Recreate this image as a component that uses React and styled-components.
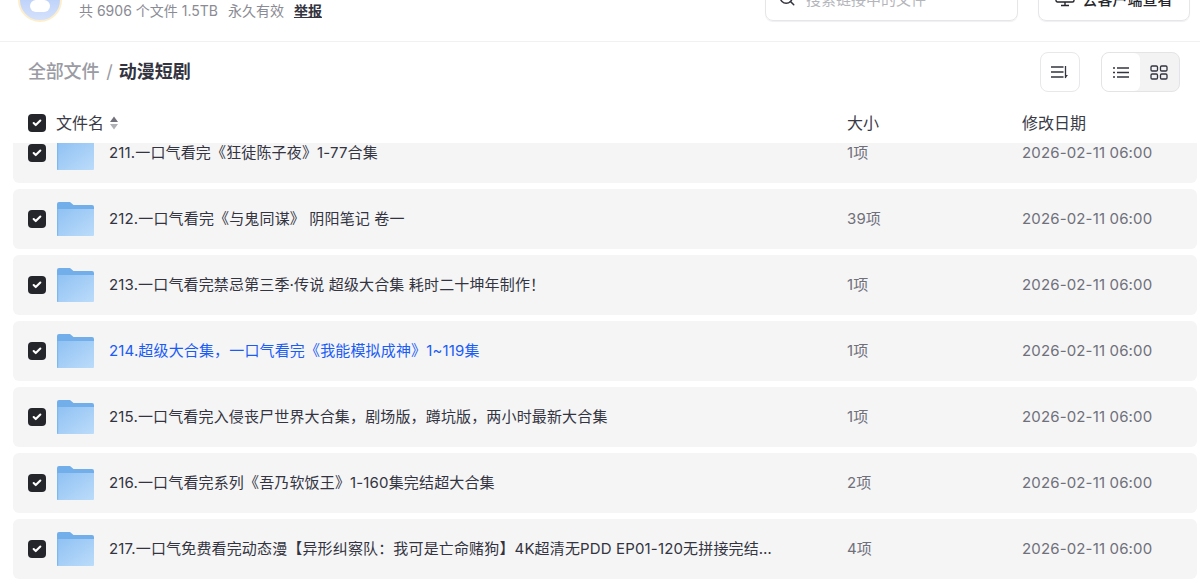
import { createGlobalStyle } from "styled-components"
import styled from "styled-components"
import { Check, Search } from "lucide-react"

const GlobalStyle = createGlobalStyle`
  html, body {
    margin: 0;
    height: 585px;
    overflow: hidden;
    background: #fff;
    font-family: Inter, "Noto Sans CJK SC", sans-serif;
    color: #25262b;
  }
`

const Page = styled.div`
  width: 1200px;
  height: 585px;
  display: flex;
  flex-direction: column;
  overflow: hidden;
`

const TopBar = styled.header`
  height: 41px;
  flex: none;
  border-bottom: 1px solid #f1f1f3;
  display: flex;
  align-items: flex-end;
  justify-content: space-between;
  padding: 0 10px 0 18px;
  overflow: hidden;
`

const ShareInfo = styled.div`
  display: flex;
  align-items: flex-end;
  gap: 17px;
  padding-bottom: 20px;
`

const Avatar = styled.div`
  width: 44px;
  height: 44px;
  flex: none;
  box-sizing: border-box;
  border-radius: 50%;
  border: 2px solid #fdeecb;
  background: linear-gradient(180deg, #a9c3f7, #d5e2fc);
  display: flex;
  align-items: center;
  justify-content: center;
  margin-bottom: -1px;
`

const AvatarDot = styled.span`
  width: 20px;
  height: 12px;
  border-radius: 6px;
  background: #fff;
  margin-top: 12px;
`

const Meta = styled.div`
  display: flex;
  gap: 10px;
  font-size: 14px;
  line-height: 18px;
  margin-bottom: 1px;
  color: #8a8b94;
`

const ReportLink = styled.a`
  color: #33343f;
  font-weight: 600;
  text-decoration: underline;
`

const TopActions = styled.div`
  display: flex;
  gap: 20px;
`

const SearchBox = styled.div`
  width: 253px;
  height: 46px;
  box-sizing: border-box;
  margin-bottom: 20px;
  border: 1px solid #e6e6e9;
  border-radius: 8px;
  display: flex;
  align-items: center;
  gap: 10px;
  padding: 0 12px;
  font-size: 15px;
  color: #b4b5bb;
  box-shadow: 0 1px 1px #f0f0f2;
`

const ClientButton = styled.div`
  width: 152px;
  height: 46px;
  box-sizing: border-box;
  margin-bottom: 20px;
  border: 1px solid #e6e6e9;
  border-radius: 8px;
  display: flex;
  align-items: center;
  justify-content: center;
  gap: 7px;
  font-size: 15px;
  font-weight: 500;
  color: #25262b;
  box-shadow: 0 1px 1px #f0f0f2;
`

const CrumbBar = styled.div`
  height: 60px;
  flex: none;
  box-sizing: border-box;
  padding: 0 20px 0 28px;
  display: flex;
  align-items: center;
  justify-content: space-between;
`

const Crumbs = styled.div`
  display: flex;
  align-items: center;
  gap: 6px;
  font-size: 18px;
  line-height: 24px;
`

const CrumbRoot = styled.span`
  color: #9a9ba3;
  font-weight: 500;
  margin-right: 1px;
  letter-spacing: -0.2px;
`

const CrumbSep = styled.span`
  color: #9a9ba3;
  font-weight: 400;
`

const CrumbCurrent = styled.span`
  color: #33343f;
  font-weight: 600;
`

const CrumbTools = styled.div`
  display: flex;
  gap: 21px;
`

const IconButton = styled.div`
  width: 40px;
  height: 40px;
  box-sizing: border-box;
  border: 1px solid #e8e8ea;
  border-radius: 8px;
  display: flex;
  align-items: center;
  justify-content: center;
  color: #33343f;
`

const ViewSwitch = styled.div`
  width: 79px;
  height: 40px;
  box-sizing: border-box;
  border: 1px solid #e4e4e7;
  border-radius: 8px;
  background: #f3f3f4;
  display: flex;
  overflow: hidden;
`

const ViewOption = styled.div`
  width: 38px;
  flex: none;
  display: flex;
  align-items: center;
  justify-content: center;
  color: #33343f;
  border-radius: 6px;
  background: ${({ $active }) => ($active ? "#fff" : "transparent")};
`

const HeadRow = styled.div`
  height: 41px;
  flex: none;
  box-sizing: border-box;
  padding-left: 28px;
  display: grid;
  grid-template-columns: 819px 175px 1fr;
  align-items: center;
  font-size: 16px;
  color: #3a3b46;
`

const HeadLabel = styled.span`
  padding-bottom: 2px;
`

const NameHead = styled.div`
  display: flex;
  align-items: center;
  gap: 10px;
`

const SortCaret = styled.svg`
  margin-left: -5px;
`

const CheckBox = styled.span`
  width: 18px;
  height: 18px;
  flex: none;
  border-radius: 4px;
  background: #25262b;
  display: flex;
  align-items: center;
  justify-content: center;
  color: #fff;
`

const ListViewport = styled.div`
  flex: 1;
  min-height: 0;
  overflow: hidden;
  padding: 0 3px 0 13px;
`

const List = styled.div`
  margin-top: -20px;
  display: flex;
  flex-direction: column;
  gap: 6px;
`

const Row = styled.div`
  height: 60px;
  flex: none;
  box-sizing: border-box;
  border-radius: 6px;
  background: #f5f5f6;
  padding-left: 15px;
  display: grid;
  grid-template-columns: 819px 175px 1fr;
  align-items: center;
  font-size: 15px;
  letter-spacing: 0.15px;
`

const NameCell = styled.div`
  display: flex;
  align-items: center;
  min-width: 0;
`

const FolderIcon = styled.svg`
  flex: none;
  margin-left: 11px;
  margin-right: 15px;
`

const FileName = styled.span`
  width: 674px;
  padding-bottom: 4px;
  overflow: hidden;
  white-space: nowrap;
  text-overflow: ellipsis;
  color: ${({ $hover }) => ($hover ? "#1a5cf5" : "#33343f")};
`

const SizeCell = styled.div`
  padding-bottom: 4px;
  color: #6f707a;
`

const DateCell = styled.div`
  padding-bottom: 2px;
  color: #6f707a;
  white-space: nowrap;
`

const files = [
  { name: "211.一口气看完《狂徒陈子夜》1-77合集", size: "1项" },
  { name: "212.一口气看完《与鬼同谋》 阴阳笔记 卷一", size: "39项" },
  { name: "213.一口气看完禁忌第三季·传说 超级大合集 耗时二十坤年制作！", size: "1项" },
  { name: "214.超级大合集，一口气看完《我能模拟成神》1~119集", size: "1项", hover: true },
  { name: "215.一口气看完入侵丧尸世界大合集，剧场版，蹲坑版，两小时最新大合集", size: "1项" },
  { name: "216.一口气看完系列《吾乃软饭王》1-160集完结超大合集", size: "2项" },
  { name: "217.一口气免费看完动态漫【异形纠察队：我可是亡命赌狗】4K超清无PDD EP01-120无拼接完结版全集", size: "4项" },
]

function Tick() {
  return (
    <CheckBox>
      <Check size={10} strokeWidth={5} />
    </CheckBox>
  )
}

function Folder() {
  return (
    <FolderIcon width="37" height="34" viewBox="0 0 37 34">
      <defs>
        <linearGradient id="folderFace" x1="0" y1="0" x2="1" y2="1">
          <stop offset="0" stopColor="#8fc1f3" />
          <stop offset="1" stopColor="#bcdcfa" />
        </linearGradient>
      </defs>
      <path d="M0 2a2 2 0 0 1 2-2h11l3.500 3H35a2 2 0 0 1 2 2V10H0z" fill="#72aeea" />
      <path d="M0 7h37V33a1 1 0 0 1-1 1H1a1 1 0 0 1-1-1z" fill="url(#folderFace)" />
      <path d="M0 7h1.200V34H1a1 1 0 0 1-1-1z" fill="#7fb8ef" />
      <path d="M28 13h5M28 15.500h5" stroke="#a9cff5" strokeWidth="1" />
    </FolderIcon>
  )
}

export default function App() {
  return (
    <Page>
      <GlobalStyle />
      <TopBar>
        <ShareInfo>
          <Avatar>
            <AvatarDot />
          </Avatar>
          <Meta>
            <span>共 6906 个文件 1.5TB</span>
            <span>永久有效</span>
            <ReportLink>举报</ReportLink>
          </Meta>
        </ShareInfo>
        <TopActions>
          <SearchBox>
            <Search size={18} color="#33343f" />
            搜索链接中的文件
          </SearchBox>
          <ClientButton>
            <svg width="20" height="18" viewBox="0 0 20 18" fill="none" stroke="#25262b" strokeWidth="1.400">
              <rect x="1" y="1" width="18" height="12" rx="1.500" />
              <path d="M6 16.500h8M10 13v3.500" />
            </svg>
            去客户端查看
          </ClientButton>
        </TopActions>
      </TopBar>
      <CrumbBar>
        <Crumbs>
          <CrumbRoot>全部文件</CrumbRoot>
          <CrumbSep>/</CrumbSep>
          <CrumbCurrent>动漫短剧</CrumbCurrent>
        </Crumbs>
        <CrumbTools>
          <IconButton>
            <svg width="20" height="14" viewBox="0 0 20 14" fill="none" stroke="currentColor" strokeWidth="1.300">
              <path d="M1 2h12.500M1 7h12.500M1 12h12.500M15.500 1v12" />
              <path d="M15 13.500l3-3.500h-3z" fill="currentColor" stroke="none" />
            </svg>
          </IconButton>
          <ViewSwitch>
            <ViewOption $active>
              <svg width="16" height="11" viewBox="0 0 16 11" fill="none" stroke="currentColor" strokeWidth="1.300">
                <path d="M0 1h2M4 1h12M0 5.500h2M4 5.500h12M0 10h2M4 10h12" />
              </svg>
            </ViewOption>
            <ViewOption>
              <svg width="18" height="15" viewBox="0 0 18 15" fill="none" stroke="currentColor" strokeWidth="1.300">
                <rect x="1" y="1" width="6.500" height="5" rx="1.200" />
                <rect x="10.500" y="1" width="6.500" height="5" rx="1.200" />
                <rect x="1" y="9" width="6.500" height="5" rx="1.200" />
                <rect x="10.500" y="9" width="6.500" height="5" rx="1.200" />
              </svg>
            </ViewOption>
          </ViewSwitch>
        </CrumbTools>
      </CrumbBar>
      <HeadRow>
        <NameHead>
          <Tick />
          <HeadLabel>文件名</HeadLabel>
          <SortCaret width="10" height="14" viewBox="0 0 10 14">
            <path d="M5 0.500l4 5.500H1z" fill="#6f707a" />
            <path d="M5 13.500l4-5.500H1z" fill="#b0b1b7" />
          </SortCaret>
        </NameHead>
        <HeadLabel>大小</HeadLabel>
        <HeadLabel>修改日期</HeadLabel>
      </HeadRow>
      <ListViewport>
        <List>
          {files.map((file) => (
            <Row key={file.name}>
              <NameCell>
                <Tick />
                <Folder />
                <FileName $hover={file.hover}>{file.name}</FileName>
              </NameCell>
              <SizeCell>{file.size}</SizeCell>
              <DateCell>2026-02-11 06:00</DateCell>
            </Row>
          ))}
        </List>
      </ListViewport>
    </Page>
  )
}
